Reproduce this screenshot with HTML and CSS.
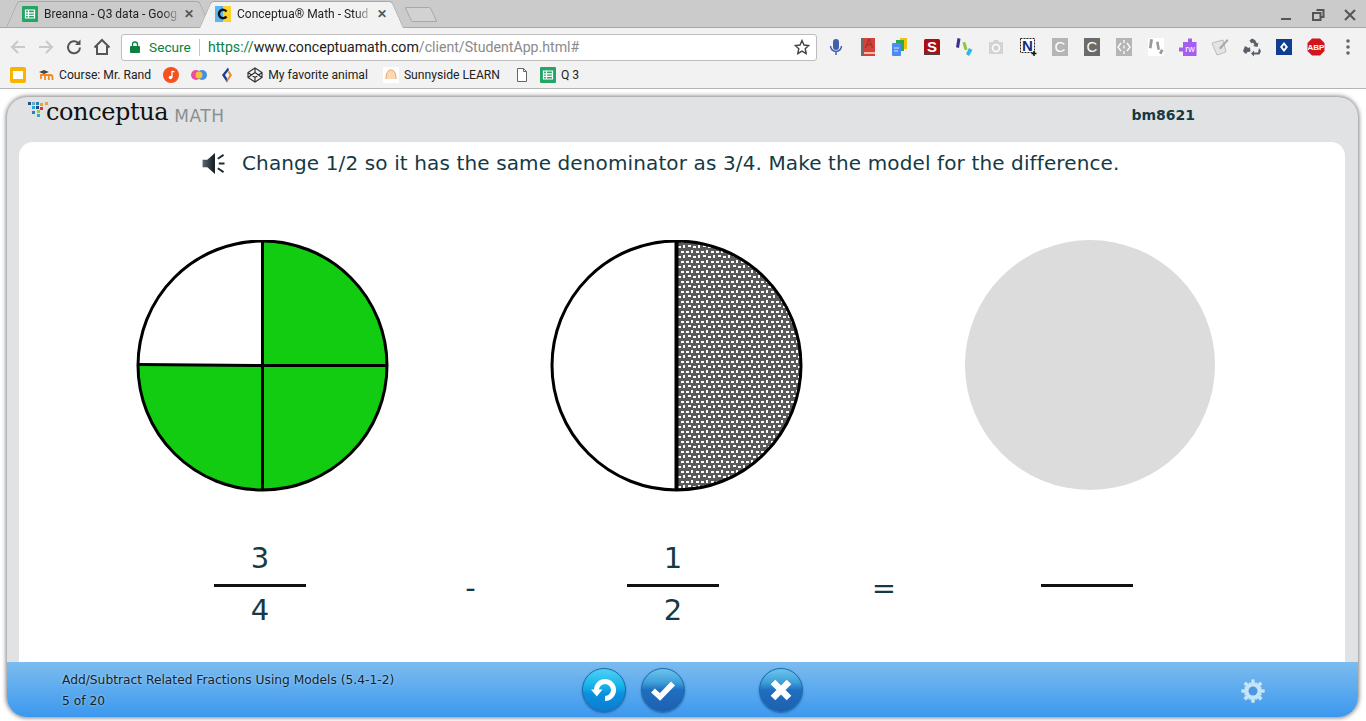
FILE: index.html
```html
<!DOCTYPE html>
<html lang="en">
<head>
    <meta charset="UTF-8">
    <meta name="viewport" content="width=device-width, initial-scale=1.0">
    <title>Conceptua Math - Student</title>
    <link rel="stylesheet" href="styles.css">
</head>
<body>
    <!-- browser tabs -->
    <div class="tabstrip">
        <div class="tab">
            <svg class="fav" viewBox="0 0 16 16"><rect width="16" height="16" rx="1" fill="#23a566"/><path d="M3.5 4h9v8h-9zM3.5 6.800h9M3.5 9.400h9M6.500 4v8" fill="none" stroke="#fff" stroke-width="1.200"/></svg>
            <span class="tab-title">Breanna - Q3 data - Goog</span>
            <span class="tab-close">✕</span>
        </div>
        <div class="tab active">
            <svg class="fav" viewBox="0 0 16 16"><rect width="8" height="16" fill="#5bb5f0"/><rect x="8" width="8" height="16" fill="#fbd32c"/><path d="M11.500 5.500A4.200 4.200 0 1 0 11.500 10.500" fill="none" stroke="#111" stroke-width="2.400"/></svg>
            <span class="tab-title">Conceptua® Math - Stud</span>
            <span class="tab-close">✕</span>
        </div>
        <div class="newtab"></div>
        <div class="winctl">
            <svg viewBox="0 0 32 20" width="32" height="20"><rect x="11" y="14" width="10" height="2" fill="#555"/></svg>
            <svg viewBox="0 0 32 20" width="32" height="20"><path d="M14.500 6h7v7h-3M11 9h7.500v7H11z" fill="none" stroke="#555" stroke-width="2"/></svg>
            <svg viewBox="0 0 32 20" width="32" height="20"><path d="M11 6l10 10M21 6l-10 10" stroke="#555" stroke-width="2"/></svg>
        </div>
    </div>

    <!-- address bar -->
    <div class="toolbar">
        <div class="nav-btn"><svg viewBox="0 0 20 20" width="20" height="20"><path d="M17 10H4M10 4l-6 6 6 6" fill="none" stroke="#c9c9c9" stroke-width="2"/></svg></div>
        <div class="nav-btn"><svg viewBox="0 0 20 20" width="20" height="20"><path d="M3 10h13M10 4l6 6-6 6" fill="none" stroke="#c9c9c9" stroke-width="2"/></svg></div>
        <div class="nav-btn"><svg viewBox="0 0 20 20" width="20" height="20"><path d="M16 10.500a6 6 0 1 1-1.800-4.500" fill="none" stroke="#555" stroke-width="2"/><path d="M16.500 2.500v5.500h-5.500z" fill="#555"/></svg></div>
        <div class="nav-btn"><svg viewBox="0 0 20 20" width="20" height="20"><path d="M2.500 10.500L10 3l7.500 7.500M5 9v8h10V9" fill="none" stroke="#555" stroke-width="2"/></svg></div>
        <div class="omnibox">
            <svg class="lock" viewBox="0 0 10 12" width="10" height="12"><path d="M2.500 5V3.500a2.500 2.500 0 0 1 5 0V5" fill="none" stroke="#0b8043" stroke-width="1.300"/><rect y="5" width="10" height="7" rx="1" fill="#0b8043"/></svg>
            <span class="secure">Secure</span>
            <span class="sep"></span>
            <span class="url"><span class="url-green">https://</span><span class="url-host">www.conceptuamath.com</span><span class="url-path">/client/StudentApp.html#</span></span>
            <svg class="star" viewBox="0 0 16 16" width="16" height="16"><path d="M8 1.500l2 4.500 4.800.5-3.600 3.200 1 4.800L8 12.100l-4.200 2.400 1-4.800L1.200 6.500 6 6z" fill="none" stroke="#444" stroke-width="1.400"/></svg>
        </div>
        <div class="extensions">
            <div class="ext"><svg viewBox="0 0 20 20"><rect x="7" y="2" width="6" height="11" rx="3" fill="#3f5fb0"/><path d="M4.500 9a5.500 5.500 0 0 0 11 0M10 15v3" fill="none" stroke="#3f5fb0" stroke-width="1.500"/></svg></div>
            <div class="ext"><svg viewBox="0 0 20 20"><rect x="3" y="1" width="14" height="18" fill="#d0423a"/><rect x="3" y="1" width="3" height="18" fill="#6b6b6b"/><rect x="6" y="15" width="11" height="2" fill="#eebbaa"/><text x="11" y="11" text-anchor="middle" class="ext-text dim-red">A</text></svg></div>
            <div class="ext"><svg viewBox="0 0 20 20"><rect x="10" y="1" width="7" height="11" fill="#f4c20d"/><rect x="6" y="3" width="8" height="11" fill="#2da94f"/><rect x="2" y="6" width="9" height="13" rx="1" fill="#4b8bf5"/><path d="M4 11h5M4 14h4" stroke="#d5e3fb" stroke-width="1"/></svg></div>
            <div class="ext"><svg viewBox="0 0 20 20"><rect x="2" y="2" width="16" height="16" rx="1.500" fill="#a60f17"/><rect x="2" y="16" width="16" height="2" fill="#444"/><text x="10" y="14.500" text-anchor="middle" class="ext-text white bold big">S</text></svg></div>
            <div class="ext"><svg viewBox="0 0 20 20"><path d="M3.500 1l3 .7L5 11l-3-.7z" fill="#3c2f8f"/><path d="M8.500 5.500l2.800-.6 2.200 7.500-2.800.8z" fill="#8ac53e"/><path d="M15 11l3.500 2-3.500 6-3-2z" fill="#29b9e6"/></svg></div>
            <div class="ext"><svg viewBox="0 0 20 20"><path d="M3 5h4l1-2h4l1 2h4v12H3z" fill="#d3d3d3"/><circle cx="10" cy="11" r="3.500" fill="none" stroke="#fff" stroke-width="1.500"/></svg></div>
            <div class="ext"><svg viewBox="0 0 20 20"><rect x="2.500" y="1.500" width="14" height="14" fill="#fff" stroke="#222" stroke-dasharray="2 1"/><text x="9.500" y="13.500" text-anchor="middle" class="ext-text navy bold big">N</text><path d="M16 14v5M13.500 16.500h5" stroke="#111" stroke-width="1.500"/></svg></div>
            <div class="ext"><svg viewBox="0 0 20 20"><rect x="2" y="1" width="16" height="18" fill="#b5b5b5"/><text x="10" y="14.500" text-anchor="middle" class="ext-text white big">C</text></svg></div>
            <div class="ext"><svg viewBox="0 0 20 20"><rect x="2" y="1" width="16" height="18" fill="#6b6b6b"/><text x="10" y="14.500" text-anchor="middle" class="ext-text white big">C</text></svg></div>
            <div class="ext"><svg viewBox="0 0 20 20"><rect x="2" y="1" width="16" height="18" fill="#b5b5b5"/><path d="M7 6l-3 4 3 4M13 6l3 4-3 4M10 3v3M10 8.500v3M10 14v3" fill="none" stroke="#fff" stroke-width="1.300"/></svg></div>
            <div class="ext"><svg viewBox="0 0 20 20"><rect x="2" y="1" width="16" height="18" fill="#fff"/><path d="M4 2l3 .6-1.500 9-2.500-.6zM10 5l2.500-.5 1.500 8-2.500.5zM15 12l2.500 1.500-2 4-2.500-1.500z" fill="#9a9a9a"/></svg></div>
            <div class="ext"><svg viewBox="0 0 20 20"><path d="M5 5h5V1.500h4V5h4.500v14H5v-4.500H1v-4h4z" fill="#a45ff0"/><text x="12" y="14.500" text-anchor="middle" class="ext-text white small">rw</text></svg></div>
            <div class="ext"><svg viewBox="0 0 20 20"><path d="M2 6l11-3 3 12-9 3z" fill="#e4e4e4" stroke="#bdbdbd"/><path d="M9 11l8-9 1.500 1.500-8 9z" fill="#a8a8a8"/></svg></div>
            <div class="ext"><svg viewBox="0 0 20 20"><path d="M7.500 3.500L10 1.500l3 1.500 2 3.500 1.500-1-1 4.500-4.500-1 1.500-1-1.500-2.500-1.500 1zM3 9l3.500 2 1.500-1 .5 4.500-4.500 1 1-1.500 0 2.500H3L1 14zM17 11l2 3-1.500 3.500H12v2l-3-3 3-3v2h4z" fill="#5a6068"/></svg></div>
            <div class="ext"><svg viewBox="0 0 20 20"><rect x="2" y="2" width="16" height="16" fill="#0f3d91"/><path d="M10 5l4 5-4 5-4-5z" fill="#fff"/><path d="M10 8l1.600 2-1.600 2-1.600-2z" fill="#0f3d91"/></svg></div>
            <div class="ext"><svg viewBox="0 0 20 20"><path d="M6 1.500h8L18.500 6v8L14 18.500H6L1.500 14V6z" fill="#d4141c"/><text x="10" y="13" text-anchor="middle" class="ext-text white bold tiny">ABP</text></svg></div>
            <div class="ext"><svg viewBox="0 0 20 20"><circle cx="10" cy="4" r="1.800" fill="#666"/><circle cx="10" cy="10" r="1.800" fill="#666"/><circle cx="10" cy="16" r="1.800" fill="#666"/></svg></div>
        </div>
    </div>

    <!-- bookmarks -->
    <div class="bookmarks">
        <div class="bm"><svg viewBox="0 0 16 16"><rect width="16" height="16" rx="2" fill="#f7b500"/><rect x="3" y="4" width="10" height="8" fill="#fff"/></svg></div>
        <div class="bm gap-12"><svg viewBox="0 0 16 16"><path d="M1 5l5-2 5 2-5 2z" fill="#444"/><path d="M3 12V8h9.500c1.500 0 2 1 2 2v3M7 8v5M10.800 8v5" fill="none" stroke="#f08a24" stroke-width="1.800"/></svg><span>Course: Mr. Rand</span></div>
        <div class="bm gap-12"><svg viewBox="0 0 16 16"><circle cx="8" cy="8" r="8" fill="#f4511e"/><path d="M9 4v6.500" stroke="#fff" stroke-width="1.300"/><circle cx="7.500" cy="10.500" r="1.800" fill="#fff"/><path d="M9 4l2.500 1" stroke="#fff" stroke-width="1.300"/></svg></div>
        <div class="bm gap-12"><svg viewBox="0 0 16 16"><circle cx="5" cy="8" r="5" fill="#e84fa0"/><circle cx="11" cy="8" r="5" fill="#3f8ef0"/><circle cx="8" cy="8" r="3.500" fill="#f7c331"/></svg></div>
        <div class="bm gap-12"><svg viewBox="0 0 16 16"><path d="M9 .5L3 8l5 7.500 1-2.500-3-5 4-5z" fill="#1d3f8f"/><path d="M10 3.500l3 4.500-5 7.500-.5-2.500 3-5-1.500-2.500z" fill="#f08a24"/></svg></div>
        <div class="bm gap-12"><svg viewBox="0 0 16 16"><path d="M8 1l7 4.500v5L8 15l-7-4.500v-5zM8 1v4.500M8 15v-4.500M1 5.500L8 10.500l7-5M1 10.500L8 5.500l7 5" fill="none" stroke="#333" stroke-width="1.200"/></svg><span>My favorite animal</span></div>
        <div class="bm gap-15"><svg viewBox="0 0 16 16"><rect width="16" height="16" fill="#fff"/><path d="M3 12c0-6 2-9 5-9s5 3 5 9z" fill="#fbd9b8"/><path d="M3 12c0-6 2-9 5-9s5 3 5 9" fill="none" stroke="#f0a060"/></svg><span>Sunnyside LEARN</span></div>
        <div class="bm gap-14"><svg viewBox="0 0 16 16"><path d="M3.500 1.500h6l3 3v10h-9z" fill="#fff" stroke="#666"/><path d="M9.500 1.500v3h3" fill="none" stroke="#666"/></svg></div>
        <div class="bm gap-10"><svg viewBox="0 0 16 16"><rect width="16" height="16" rx="1" fill="#23a566"/><path d="M3.500 4h9v8h-9zM3.500 6.800h9M3.500 9.400h9M6.500 4v8" fill="none" stroke="#fff" stroke-width="1.200"/></svg><span>Q 3</span></div>
    </div>

    <!-- student app -->
    <div class="page">
        <div class="app">
            <header class="app-header">
                <div class="logo">
                    <svg class="logo-mark" viewBox="0 0 22 20" width="22" height="20">
                        <rect x="0" y="1" width="3" height="3" fill="#1f4f7a"/><rect x="4" y="1" width="3" height="3" fill="#6aa6c8"/><rect x="8" y="1" width="3" height="3" fill="#2a7fb8"/><rect x="12" y="2" width="3" height="3" fill="#e8a33d"/><rect x="17" y="1" width="3" height="3" fill="#e8a33d"/>
                        <rect x="4" y="5" width="3" height="3" fill="#28a8d8"/><rect x="8" y="5" width="3" height="3" fill="#1f4f7a"/><rect x="12" y="6" width="3" height="3" fill="#d9363e"/>
                        <rect x="4" y="10" width="3" height="3" fill="#2a7fb8"/><rect x="9" y="9" width="3" height="3" fill="#9cc63c"/><rect x="9" y="13" width="3" height="3" fill="#28a8d8"/>
                    </svg>
                    <span class="logo-word">conceptua</span>
                    <span class="logo-math">MATH</span>
                </div>
                <div class="username">bm8621</div>
            </header>

            <main class="panel">
                <div class="prompt">
                    <svg class="speaker" viewBox="0 0 24 22" width="24" height="21">
                        <defs><linearGradient id="spk" x1="0" x2="1"><stop offset="0" stop-color="#5d6770"/><stop offset="1" stop-color="#0f1a20"/></linearGradient></defs>
                        <path d="M0 7h5l8-7v22l-8-7H0z" fill="url(#spk)"/>
                        <path d="M16 6l6-4M17 11h6M16 16l6 4" stroke="#1e2a30" stroke-width="2"/>
                    </svg>
                    <span>Change 1/2 so it has the same denominator as 3/4. Make the model for the difference.</span>
                </div>

                <div class="models">
                    <svg class="model" viewBox="0 0 254 254">
                        <circle cx="126.500" cy="125.500" r="124.500" fill="#fff"/>
                        <path d="M126.500 125.500V1A124.500 124.500 0 0 1 126.500 250A124.500 124.500 0 0 1 2 125.500z" fill="#12cc12"/>
                        <path d="M126.500 1V250M2 124.500L126.500 125.500H251" fill="none" stroke="#000" stroke-width="3"/>
                        <circle cx="126.500" cy="125.500" r="124.500" fill="none" stroke="#000" stroke-width="3"/>
                    </svg>
                    <svg class="model" viewBox="0 0 254 254">
                        <defs>
                            <pattern id="dots" width="15" height="10" patternUnits="userSpaceOnUse">
                                <rect width="15" height="10" fill="#5a5a5a"/>
                                <rect x="1" y="1" width="3" height="2" fill="#fff"/><rect x="6" y="0" width="2" height="3" fill="#fff"/><rect x="11" y="1" width="3" height="2" fill="#fff"/>
                                <rect x="3" y="5" width="3" height="2" fill="#fff"/><rect x="8" y="6" width="3" height="2" fill="#fff"/><rect x="13" y="5" width="2" height="3" fill="#fff"/>
                            </pattern>
                        </defs>
                        <circle cx="126.500" cy="125.500" r="124.500" fill="#fff"/>
                        <path d="M126.500 1A124.500 124.500 0 0 1 126.500 250z" fill="url(#dots)"/>
                        <path d="M126.500 1V250" stroke="#000" stroke-width="4"/>
                        <circle cx="126.500" cy="125.500" r="124.500" fill="none" stroke="#000" stroke-width="3"/>
                    </svg>
                    <svg class="model" viewBox="0 0 254 254">
                        <circle cx="126" cy="125" r="125" fill="#dcdcdc"/>
                    </svg>
                </div>

                <div class="equation">
                    <div class="fraction"><div class="num">3</div><div class="bar"></div><div class="num">4</div></div>
                    <div class="operator">-</div>
                    <div class="fraction"><div class="num">1</div><div class="bar"></div><div class="num">2</div></div>
                    <div class="operator wide">=</div>
                    <div class="fraction"><div class="num"></div><div class="bar"></div><div class="num"></div></div>
                </div>
            </main>

            <footer class="app-footer">
                <div class="lesson">
                    <div>Add/Subtract Related Fractions Using Models (5.4-1-2)</div>
                    <div>5 of 20</div>
                </div>
                <div class="round-btn cyan"><svg viewBox="0 0 28 26" width="28" height="26"><path d="M15 21.500a8.500 8.500 0 1 0-8.500-8.500" fill="none" stroke="#fff" stroke-width="5"/><path d="M1 12.500h11.500l-5.700 7z" fill="#fff"/></svg></div>
                <div class="round-btn"><svg viewBox="0 0 28 26" width="28" height="26"><path d="M4 13.500l7 6.500L24 6.500" fill="none" stroke="#fff" stroke-width="5.500"/></svg></div>
                <div class="round-btn third"><svg viewBox="0 0 26 26" width="26" height="26"><path d="M5 5l16 16M21 5L5 21" stroke="#fff" stroke-width="6.500"/></svg></div>
                <svg class="gear" viewBox="0 0 26 26" width="26" height="26">
                    <g fill="#c3e6fb" stroke="#5f9ddc" stroke-width="0.500">
                        <circle cx="13" cy="13" r="9.500"/>
                        <rect x="11" y="1" width="4" height="24" rx="1"/>
                        <rect x="1" y="11" width="24" height="4" rx="1"/>
                        <rect x="11" y="1" width="4" height="24" rx="1" transform="rotate(45 13 13)"/>
                        <rect x="11" y="1" width="4" height="24" rx="1" transform="rotate(-45 13 13)"/>
                    </g>
                    <circle cx="13" cy="13" r="8" fill="#c3e6fb"/>
                    <circle cx="13" cy="13" r="4.500" fill="#4f95e0"/>
                </svg>
            </footer>
        </div>
    </div>
</body>
</html>
```

FILE: styles.css
```css
* {
    box-sizing: border-box;
}
body {
    margin: 0;
    width: 1366px;
    height: 721px;
    overflow: hidden;
    background-color: #fff;
    font-family: Roboto, "Liberation Sans", sans-serif;
    display: flex;
    flex-direction: column;
}

/* tabs */
.tabstrip {
    height: 28px;
    flex: none;
    display: flex;
    align-items: flex-end;
    padding-left: 12px;
    background-color: #cbcbcb;
    border-bottom: 1px solid #a8a8a8;
}
.tab {
    position: relative;
    z-index: 0;
    width: 193px;
    height: 27px;
    margin-bottom: -1px;
    padding: 0 11px 1px 10px;
    display: flex;
    align-items: center;
    font-size: 12px;
    color: #222;
}
.tab::before,
.tab::after {
    content: "";
    position: absolute;
    top: 0;
    bottom: 1px;
    width: 60%;
    background-color: #cbcbcb;
    border-top: 1px solid #a8a8a8;
}
.tab::before {
    left: -6px;
    border-left: 1px solid #a8a8a8;
    border-radius: 3px 0 0 0;
    transform: skewX(-24deg);
    transform-origin: bottom left;
}
.tab::after {
    right: -6px;
    border-right: 1px solid #a8a8a8;
    border-radius: 0 3px 0 0;
    transform: skewX(24deg);
    transform-origin: bottom right;
}
.tab.active {
    z-index: 1;
}
.tab.active::before,
.tab.active::after {
    background-color: #f2f2f2;
    bottom: 0;
}
.tab > * {
    position: relative;
    z-index: 1;
}
.fav {
    width: 16px;
    height: 16px;
    flex: none;
    margin-right: 6px;
}
.tab-title {
    flex: 1;
    white-space: nowrap;
    -webkit-mask-image: linear-gradient(to right, #000 85%, transparent);
    mask-image: linear-gradient(to right, #000 85%, transparent);
}
.tab-close {
    font-size: 12px;
    font-weight: bold;
    color: #555;
    margin-left: 2px;
}
.newtab {
    width: 26px;
    height: 15px;
    margin: 0 0 5px 10px;
    background-color: #d2d2d2;
    border: 1px solid #a8a8a8;
    border-radius: 2px;
    transform: skewX(25deg);
}
.winctl {
    margin-left: auto;
    display: flex;
    align-self: center;
}

/* address bar */
.toolbar {
    height: 34px;
    flex: none;
    display: flex;
    align-items: center;
    padding: 4px 0 0 4px;
    background-color: #f2f2f2;
}
.nav-btn {
    width: 28px;
    display: flex;
    justify-content: center;
}
.omnibox {
    width: 696px;
    height: 27px;
    margin-left: 5px;
    margin-right: 3px;
    padding: 0 6px 0 8px;
    display: flex;
    align-items: center;
    background-color: #fff;
    border: 1px solid #bdbdbd;
    border-radius: 3px;
}
.lock {
    margin-right: 9px;
}
.secure {
    font-size: 13.700px;
    color: #0b8043;
}
.sep {
    width: 1px;
    height: 17px;
    margin: 0 8px;
    background-color: #c4c4c4;
}
.url {
    flex: 1;
    font-size: 14.150px;
    white-space: nowrap;
}
.url-green {
    color: #0b8043;
}
.url-host {
    color: #222;
}
.url-path {
    color: #8a8a8a;
}
.extensions {
    display: flex;
}
.ext {
    width: 32px;
    height: 20px;
    display: flex;
    justify-content: center;
}
.ext svg {
    width: 20px;
    height: 20px;
}
.ext-text {
    font-family: "Liberation Sans", sans-serif;
    font-size: 12px;
}
.ext-text.white {
    fill: #fff;
}
.ext-text.navy {
    fill: #12307a;
}
.ext-text.dim-red {
    fill: #a82a24;
}
.ext-text.bold {
    font-weight: bold;
}
.ext-text.big {
    font-size: 15px;
}
.ext-text.small {
    font-size: 9px;
}
.ext-text.tiny {
    font-size: 8px;
}

/* bookmarks */
.bookmarks {
    height: 27px;
    flex: none;
    display: flex;
    align-items: center;
    padding-left: 10px;
    background-color: #f2f2f2;
    border-bottom: 1px solid #b5b5b5;
    font-size: 12.150px;
    color: #222;
}
.bm {
    display: flex;
    align-items: center;
}
.bm svg {
    width: 16px;
    height: 16px;
    flex: none;
}
.bm span {
    margin-left: 5px;
    white-space: nowrap;
}
.gap-10 {
    margin-left: 10px;
}
.gap-12 {
    margin-left: 12px;
}
.gap-14 {
    margin-left: 14px;
}
.gap-15 {
    margin-left: 15px;
}

/* app frame */
.page {
    flex: 1;
    min-height: 0;
    padding: 8px 8px 4px 7px;
}
.app {
    height: 620px;
    display: flex;
    flex-direction: column;
    overflow: hidden;
    background-color: #e1e2e4;
    border-radius: 20px;
    box-shadow: 0 0 4px 1px rgba(0, 0, 0, 0.5);
    font-family: "DejaVu Sans", Verdana, sans-serif;
    color: #153a45;
}
.app-header {
    height: 45px;
    flex: none;
    display: flex;
    padding: 4px 163px 0 21px;
    justify-content: space-between;
}
.logo {
    display: flex;
    align-items: flex-start;
}
.logo-mark {
    flex: none;
}
.logo-word {
    margin-left: -4px;
    font: 24px/22px "DejaVu Serif", serif;
    letter-spacing: -0.400px;
    color: #111;
}
.logo-math {
    margin-left: 6px;
    margin-top: 5px;
    font-size: 17px;
    line-height: 20px;
    letter-spacing: 0.600px;
    color: #8b8f93;
}
.username {
    margin-top: 5px;
    font-size: 14px;
    font-weight: bold;
    line-height: 18px;
}

/* question area */
.panel {
    flex: 1;
    min-height: 0;
    margin: 0 13px 0 12px;
    background-color: #fff;
    border-radius: 14px 14px 0 0;
}
.prompt {
    height: 98px;
    padding: 9px 0 0 183px;
    display: flex;
    align-items: flex-start;
    font-size: 20px;
    letter-spacing: 0.120px;
    line-height: 24px;
    white-space: nowrap;
}
.speaker {
    margin: 2px 16px 0 0;
    flex: none;
}
.models {
    display: flex;
    gap: 160px;
    padding-left: 117px;
}
.model {
    width: 254px;
    height: 254px;
    flex: none;
}
.equation {
    display: flex;
    padding: 46px 0 0 195px;
}
.fraction {
    width: 92px;
    flex: none;
}
.num {
    height: 36px;
    font-size: 29px;
    line-height: 36px;
    text-align: center;
}
.bar {
    height: 3px;
    margin: 8px 0 5px;
    background-color: #111;
}
.operator {
    width: 321px;
    flex: none;
    padding: 30px 0 0 8px;
    font-size: 29px;
    line-height: 36px;
    text-align: center;
}
.operator.wide {
    width: 322px;
}

/* footer */
.app-footer {
    height: 55px;
    flex: none;
    display: flex;
    align-items: center;
    padding-left: 55px;
    background: linear-gradient(#7cbcef, #3c98ee);
}
.lesson {
    width: 520px;
    flex: none;
    padding-top: 2px;
    font-size: 12.250px;
    line-height: 21px;
    color: #14232b;
    text-shadow: 0 0 3px rgba(255, 255, 255, 0.55);
}
.round-btn {
    width: 44px;
    height: 44px;
    flex: none;
    margin-right: 15px;
    display: flex;
    align-items: center;
    justify-content: center;
    border-radius: 50%;
    border: 1px solid #1a6cab;
    background: linear-gradient(#6cc5ee 0, #3f9fd8 32%, #1f6fc0 50%, #1e5fb0 100%);
    box-shadow: 0 1px 2px rgba(10, 60, 120, 0.6);
}
.round-btn.cyan {
    background: linear-gradient(#4fd0f5 0, #16b4ea 40%, #0a8fdc 60%, #0c7ed2 100%);
}
.round-btn.third {
    margin-left: 59px;
}
.gear {
    margin: 3px 92px 0 auto;
}
```
